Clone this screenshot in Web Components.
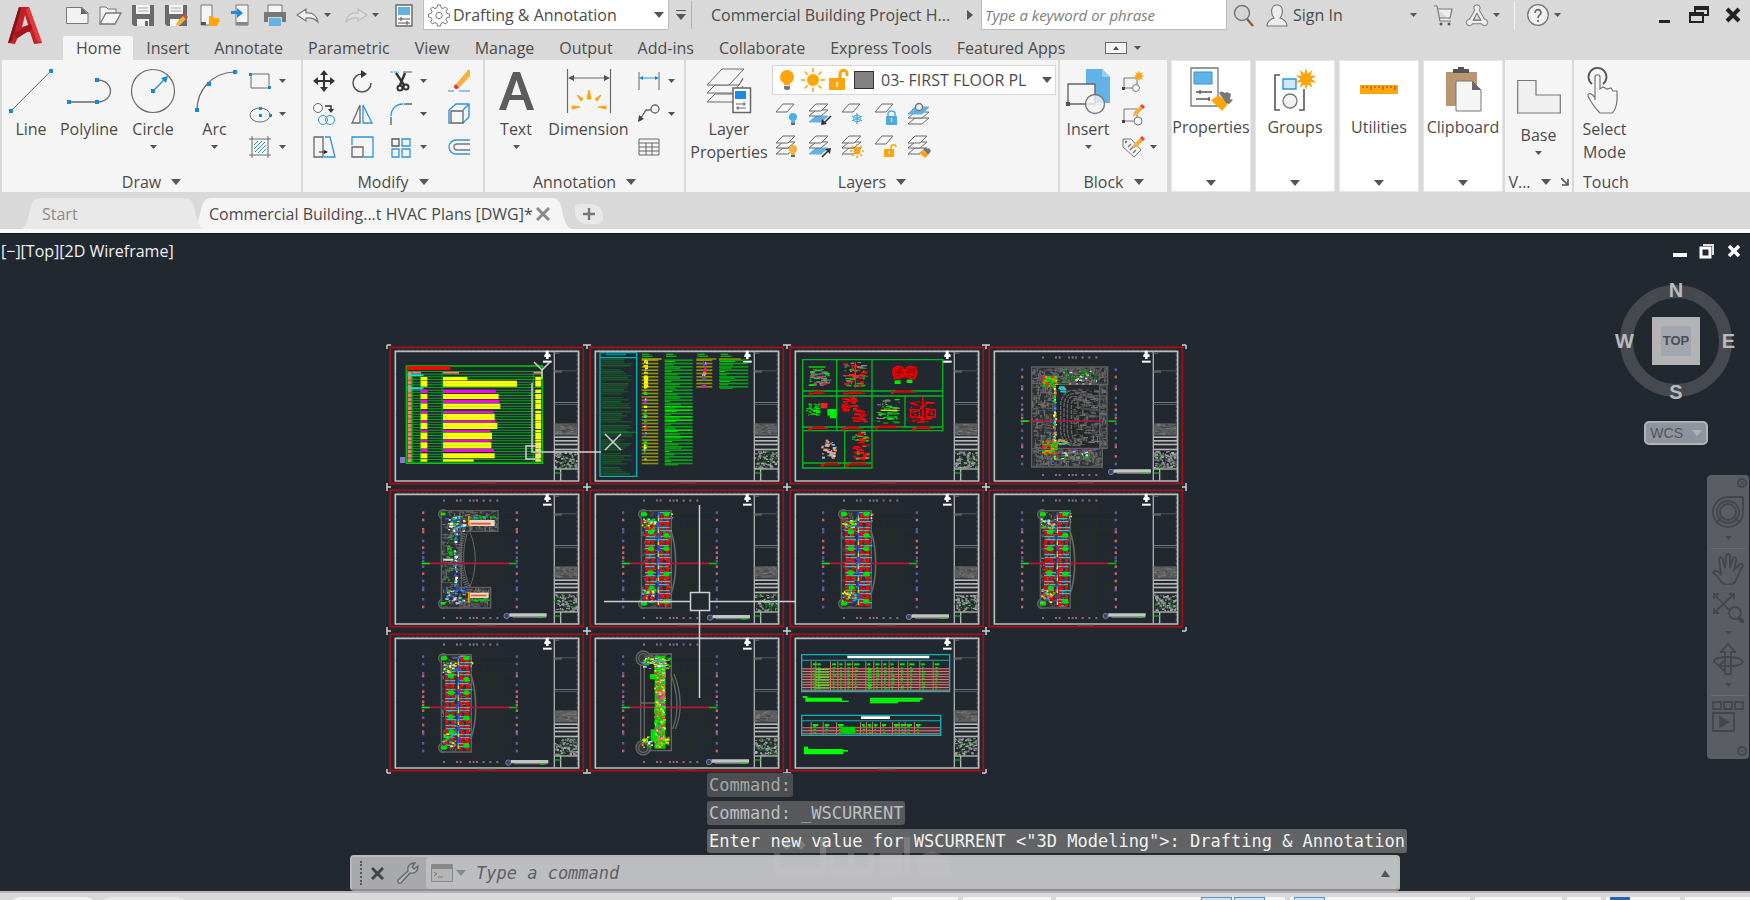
<!DOCTYPE html>
<html lang="en">
<head>
<meta charset="utf-8">
<title>Commercial Building Project HVAC</title>
<style>
  html, body {
    margin: 0;
    height: 100%;
    overflow: hidden;
    background: #d9d9d9;
  }
  body {
    font-family: "Open Sans", "Noto Sans", sans-serif;
    font-size: 16px;
    color: #4b4b4b;
  }
</style>
</head>
<body>
<cad-app></cad-app>

<script>
// ----- Shared bits -----
const RESET = `
  * { box-sizing: border-box; }
  button { border: 0; padding: 0; margin: 0; background: none; color: inherit; font: inherit; cursor: pointer; }
  svg { display: block; flex: none; }
`;

const caret = (w = 8, h = 5, color = '#555') =>
  `<svg width="${w}" height="${h}" viewBox="0 0 10 6" preserveAspectRatio="none"><path d="M0 0H10L5 6Z" fill="${color}"/></svg>`;

const B = '#2b95e0';
const G = '#6b6b6b';
const O = '#fda50a';
const sheet = (x, y, w = 18, h = 8, fill = '#f5f5f5') =>
  `<path d="M${x} ${y + h}L${x + 7} ${y}H${x + w}L${x + w - 7} ${y + h}Z" fill="${fill}" stroke="${fill === '#f5f5f5' ? G : '#62b2e6'}"/>`;
const stack = (last = '#f5f5f5') => sheet(0, 13, 19, 6, last) + sheet(0, 7, 19, 6) + sheet(0, 1, 19, 7);
const star = (cx, cy, r, n = 8) => {
  let d = '';
  for (let i = 0; i < n * 2; i++) {
    const a = Math.PI * i / n - Math.PI / 2;
    const q = i % 2 ? r * 0.5 : r;
    d += (i ? 'L' : 'M') + (cx + q * Math.cos(a)).toFixed(1) + ' ' + (cy + q * Math.sin(a)).toFixed(1);
  }
  return `<path d="${d}Z" fill="${O}"/>`;
};
const sun = (cx, cy, r) => {
  let s = `<circle cx="${cx}" cy="${cy}" r="${r}" fill="${O}"/>`;
  for (let i = 0; i < 8; i++) {
    s += `<path d="M${cx} ${cy - r - 1.5}V${cy - r * 2}" transform="rotate(${i * 45} ${cx} ${cy})" stroke="${O}" stroke-width="1.6"/>`;
  }
  return s;
};
const bulb = (cx, cy, r, c) =>
  `<circle cx="${cx}" cy="${cy}" r="${r}" fill="${c}"/><path d="M${cx - r / 2} ${cy + r}h${r}v2h-${r}z" fill="${c}"/><path d="M${cx - r / 2} ${cy + r + 2}h${r}v${r / 2}h-${r}z" fill="#666"/>`;
const pencil = (x, y) =>
  `<path d="M${x} ${y + 10}l1-4 6-6 3 3-6 6z" fill="#f3b13c"/><path d="M${x + 7} ${y}l2-2 3 3-2 2z" fill="#e8432e"/>`;

// ----- Icon drawings: [viewBox size, markup] -----
const ICONS = {
  // large tools
  line: [44, `<path d="M2 42L42 2" stroke="${G}" fill="none"/><path d="M0 40h4v4h-4zM40 0h4v4h-4z" fill="#1588e0"/>`],
  polyline: [44, `<path d="M2 33H30C48 33 48 11 30 11" stroke="${G}" fill="none" stroke-width="1.3"/><path d="M0 31h4v4H0zM28 31h4v4h-4zM28 9h4v4h-4z" fill="#1588e0"/>`],
  circle: [44, `<circle cx="22" cy="22" r="21.500" stroke="${G}" fill="none" stroke-width="1.2"/><path d="M22 22L34 10" stroke="${B}" stroke-width="1.4"/><path d="M20 20h4v4h-4zM37 7l-2 7-5-5z" fill="#1588e0"/>`],
  arc: [44, `<path d="M4 41C4 22 18 4 41 3" stroke="${G}" fill="none" stroke-width="1.2"/><path d="M2 39h4v4H2zM14 13h4v4h-4zM40 1h4v4h-4z" fill="#1588e0"/>`],
  text: [44, `<path d="M5 41L19 3H26L40 41H33L29.500 31H15.500L12 41ZM17.500 26H27.500L22.500 11Z" fill="#5c5c5c"/>`],
  dimension: [44, `<path d="M.5 0V44M43.500 0V44M4 9H40" stroke="${G}" stroke-width="1.2"/><path d="M1 9l6-3v6zM43 9l-6-3v6z" fill="#555"/><path d="M20 30l2-9 2 9zM14 32l-4-6 6 4zM30 32l4-6-6 4zM13 38l-8-1v3zM31 38l8-1v3z" fill="${O}" stroke="${O}"/>`],
  layerprops: [44, `<path d="M0 33L8 25H30M0 33H26M0 24L8 16H32L36 9" fill="none" stroke="${G}"/><path d="M0 24H26L36 10M27 32l9-15" fill="none" stroke="${G}"/><path d="M0 16L15 0H37L22 16Z" fill="#f5f5f5" stroke="${G}"/><path d="M26 19H43.500V43.500H26Z" fill="#fff" stroke="#666" stroke-width="1.5"/><path d="M28 22h11v8H28z" fill="#1b8be6"/><path d="M29 35h10M29 39h10M37 33v4M31 37v4" stroke="#666"/>`],
  insert: [44, `<path d="M20 0H36L44 8V34H20Z" fill="#62b2e6"/><path d="M36 0V8H44Z" fill="#9ccbec"/><path d="M2 15H29V35H2Z" fill="#f5f5f5" stroke="#666" stroke-width="1.4"/><circle cx="29" cy="35" r="9.500" fill="#f2f2f2" fill-opacity=".8" stroke="#777" stroke-width="1.4"/><path d="M0 33h4v4H0z" fill="#555"/>`],
  properties: [44, `<path d="M2 1H29V39H2Z" fill="#fafafa" stroke="#777" stroke-width="1.3"/><path d="M5 5h18v12H5z" fill="#62b2e6" stroke="#2b95e0"/><path d="M7 25h16M7 32h14M11 23v4M20 30v4" stroke="#555" stroke-width="1.3"/><path d="M22 33l8-5 9 9-6 7z" fill="${O}"/><path d="M30 26c5-4 4 2 8-1l4 2-1 5 3 1-4 4-3-1z" fill="#777"/>`],
  groups: [44, `<path d="M7 8H2V43H7M26 43H31V22" fill="none" stroke="#555" stroke-width="1.6"/><path d="M10 12h13v10H10z" fill="#cfe6f7" stroke="${B}" stroke-width="1.4"/><circle cx="17" cy="34" r="7" fill="#f2f2f2" stroke="#777" stroke-width="1.3"/>${star(33, 12, 11, 10)}`],
  utilities: [44, `<path d="M3 18H41V27H3Z" fill="${O}"/><path d="M6 19v2M10 19v2M14 19v4M18 19v2M22 19v2M26 19v4M30 19v2M34 19v2M38 19v4" stroke="#7a5200"/>`],
  clipboard: [44, `<path d="M5 5H36V39H5Z" fill="#b8966f"/><path d="M12 2h5V0h6v2h5v4H12z" fill="#555"/><path d="M15 14H31L40 23V44H15Z" fill="#f5f5f5" stroke="#777"/><path d="M31 14V23H40Z" fill="#666"/>`],
  base: [44, `<path d="M.7 5.500H19V20H43.300V38H.7Z" fill="#f0f0f0" stroke="#777" stroke-width="1.2"/>`],
  select: [44, `<path d="M9 15a9 9 0 1 1 11 0" fill="none" stroke="#555" stroke-width="1.8"/><path d="M12 31V8C12 5 17 5 17 8V20L20 18 24 20 28 19 30 22 34 22V31C34 37 31 43 29 44H17C12 39 8 33 5 27 5 23 9 24 12 29" fill="#f5f5f5" stroke="#777" stroke-width="1.2"/>`],

  // small tools
  rect: [22, `<path d="M2 4H20V18H2Z" fill="none" stroke="${G}"/><path d="M0 3h3v3H0zM19 16h3v3h-3z" fill="#1588e0"/>`],
  ellipse: [22, `<ellipse cx="11" cy="12" rx="10" ry="7" fill="none" stroke="${G}"/><path d="M10 4h3v3h-3zM10 11h3v3h-3zM20 11h3v3h-3z" fill="#1588e0"/>`],
  hatch: [22, `<path d="M3 0V22M19 0V22M0 3H22M0 19H22" stroke="${G}"/><path d="M5 9L9 5M5 13L13 5M6 16L16 6M9 17L17 9M13 17L17 13" stroke="${B}"/>`],
  move: [22, `<path d="M11 2V20M2 11H20" stroke="#333" stroke-width="2"/><path d="M11 0l4 5H7zM11 22l4-5H7zM0 11l5-4v8zM22 11l-5-4v8z" fill="#333"/>`],
  rotate: [22, `<path d="M11 4A9 9 0 1 0 20 13" fill="none" stroke="#555" stroke-width="1.500"/><path d="M10 0l6 4-6 4z" fill="#333"/>`],
  trim: [22, `<path d="M0 2H9" stroke="${B}" stroke-dasharray="3 1"/><path d="M13 2H22" stroke="#555"/><path d="M6 3L14 15M15 3L10 15" stroke="#333" stroke-width="2.400"/><circle cx="10" cy="18" r="2.500" fill="none" stroke="#333" stroke-width="2"/><circle cx="16" cy="17" r="2.500" fill="none" stroke="#333" stroke-width="2"/>`],
  erase: [22, `<path d="M8 14L20 0H22V6L12 17Z" fill="#f3b13c"/><path d="M6 16c2-3 4-1 5 2-3 2-5 1-5-2z" fill="#e8332e"/><path d="M0 21H6" stroke="#777"/><path d="M11 21H22" stroke="${B}"/>`],
  copy: [22, `<circle cx="5" cy="5" r="4.500" fill="none" stroke="${G}"/><circle cx="10" cy="17" r="4.500" fill="none" stroke="${B}"/><circle cx="17" cy="17" r="4.500" fill="none" stroke="${B}"/><path d="M12 3H18V7" fill="none" stroke="#333" stroke-width="1.500"/><path d="M18 10l-3-4h6z" fill="#333"/>`],
  mirror: [22, `<path d="M9 2V20H1Z" fill="none" stroke="${G}" stroke-width="1.300"/><path d="M12 2V20H21Z" fill="none" stroke="${B}" stroke-width="1.300"/>`],
  fillet: [22, `<path d="M1 13C1 6 6 1 13 1" fill="none" stroke="${B}" stroke-width="1.400"/><path d="M14 1H22M1 14V22" stroke="#666" stroke-width="1.400"/>`],
  explode: [22, `<path d="M1 7L8 1H21V14L15 20M21 1L15 7M1 7V20H3" fill="none" stroke="${B}" stroke-width="1.400"/><path d="M3 8H15V20H3Z" fill="#f5f5f5" stroke="#666" stroke-width="1.300"/>`],
  stretch: [22, `<path d="M1 1H10V21H1Z" fill="none" stroke="#666" stroke-width="1.300"/><path d="M12 1H17L22 21H11" fill="none" stroke="${B}" stroke-width="1.300"/><path d="M6 16H12" stroke="#222"/><path d="M15 16l-4-2v4z" fill="#222"/>`],
  scale: [22, `<path d="M1 9V1H22V21H13" fill="none" stroke="${B}" stroke-width="1.300"/><path d="M1 11H12V21H1Z" fill="none" stroke="#666" stroke-width="1.300"/>`],
  array: [22, `<path d="M2 3h7v7H2z" fill="none" stroke="#555" stroke-width="1.300"/><path d="M12 3h8v7h-8zM2 13h7v8H2zM12 13h8v8h-8z" fill="none" stroke="${B}" stroke-width="1.300"/>`],
  offset: [22, `<path d="M22 4H8A7 7 0 0 0 8 18H22" fill="none" stroke="${B}" stroke-width="1.300"/><path d="M22 8H9A3 3 0 0 0 9 14H22" fill="none" stroke="#777" stroke-width="1.300"/>`],
  linear: [22, `<path d="M1 2V20M21 2V20" stroke="#666"/><path d="M3 8H19" stroke="${B}"/><path d="M1 8l4-2v4zM21 8l-4-2v4z" fill="#1588e0"/>`],
  leader: [22, `<circle cx="17" cy="6" r="4" fill="none" stroke="#666" stroke-width="1.300"/><path d="M13 7H8L3 15" fill="none" stroke="#666" stroke-width="1.300"/><path d="M0 19l1-7 5 4z" fill="#444"/>`],
  table: [22, `<path d="M1 3H21V19H1ZM1 7H21M1 11H21M1 15H21M8 7V19M14 7V19" fill="none" stroke="#666"/>`],
  lyOff: [22, sheet(0, 1) + bulb(17, 14, 4, '#4fb0de')],
  lyPrev: [22, stack('#62b2e6') + `<path d="M22 13L14 21" stroke="#333" stroke-width="1.600"/><path d="M12 22l1-6 5 5z" fill="#333"/>`],
  lyFreeze: [22, sheet(0, 1) + `<path d="M15 10V21M10 13L20 18M20 13L10 18" stroke="#4fa9dc" stroke-width="1.300"/><circle cx="15" cy="15.500" r="3.500" fill="none" stroke="#4fa9dc"/>`],
  lyLock: [22, sheet(0, 1) + `<path d="M13 14v-3c0-4 7-4 7 0v3" fill="none" stroke="#4fa9dc" stroke-width="1.500"/><path d="M11 13h11v9H11z" fill="#4fa9dc"/><path d="M16.500 15v4" stroke="#fff"/>`],
  lyCurrent: [22, sheet(0, 15, 21, 6) + sheet(0, 9, 21, 6) + sheet(0, 4, 21, 7, '#62b2e6') + `<circle cx="11" cy="4" r="3.500" fill="#eee" stroke="#777" stroke-width="1.300"/>`],
  lyOn: [22, stack() + bulb(17, 14, 4, '#f3b13c')],
  lyNext: [22, stack('#62b2e6') + `<path d="M13 22L20 15" stroke="#333" stroke-width="1.600"/><path d="M22 13l-1 6-5-5z" fill="#333"/>`],
  lyThaw: [22, stack() + sun(15, 16, 3.5)],
  lyUnlock: [22, sheet(0, 1) + `<path d="M16 14v-2c0-3 5-3 5 0" fill="none" stroke="${O}" stroke-width="1.500"/><path d="M9 14h10v8H9z" fill="${O}"/><path d="M14 16v3" stroke="#fff"/>`],
  lyMatch: [22, stack() + `<path d="M11 18l4-3 5 5-3 3z" fill="${O}"/><path d="M15 14c4-3 3 1 6-1l2 3-3 4z" fill="#777"/>`],
  blkNew: [22, `<path d="M2 8H15V18H2Z" fill="none" stroke="#777"/><path d="M0 17h3v3H0z" fill="#444"/><circle cx="14" cy="18" r="3.500" fill="#f5f5f5" stroke="#777"/>${star(17, 6, 5.5)}`],
  blkEdit: [22, `<path d="M2 6H15V18H2Z" fill="none" stroke="#777"/><path d="M0 17h3v3H0z" fill="#444"/><circle cx="16" cy="18" r="4" fill="#f5f5f5" stroke="#777"/>${pencil(11, 3)}`],
  blkAttr: [22, `<path d="M1 3L9 3 19 14 12 21 1 11Z" fill="#f5f5f5" stroke="#777"/><circle cx="4" cy="6" r="1.200" fill="#777"/><path d="M6 11l3-3M8 14l5-5M11 17l3-3" stroke="#777" stroke-width="1.400"/>${pencil(11, 2)}`],

  // quick access
  qNew: [22, `<path d="M0.500 3.500H16L22 9V19.500H.5Z" fill="#f2f2f2" stroke="#777"/><path d="M15 3l7 7h-7z" fill="#666"/>`],
  qOpen: [22, `<path d="M1 20V3H7L9 5H17V9" fill="#f2f2f2" stroke="#777"/><path d="M1 20L7 9H22L16 20Z" fill="#f5f5f5" stroke="#777" stroke-width="1.300"/>`],
  qSave: [22, `<path d="M0 1H22V22H2L0 20Z" fill="#6a6a6a"/><path d="M4 1H18V10H4ZM5 15H17V22H5Z" fill="#f4f4f4"/><path d="M13 17h3v5h-3z" fill="#666"/><path d="M6 4h10M6 7h10" stroke="#aaa"/>`],
  qSaveAs: [22, `<path d="M0 1H22V22H2L0 20Z" fill="#6a6a6a"/><path d="M4 1H18V10H4ZM5 15H14V22H5Z" fill="#f4f4f4"/><path d="M6 4h10M6 7h10" stroke="#aaa"/>${pencil(11, 12)}`],
  qFrom: [22, `<path d="M3 1H14V21H3Z" fill="#f4f4f4" stroke="#777"/><path d="M3 18h5v3H3z" fill="#555"/><path d="M11 21V12h4l1 2h5v2h1l-3 6h-9z" fill="${O}"/>`],
  qTo: [22, `<path d="M5 1H17V21H5Z" fill="#f4f4f4" stroke="#777"/><path d="M5 18h12v3H5z" fill="#888"/><path d="M0 7h6V4l6 5-6 5v-4H0z" fill="#1b8be6"/>`],
  qPlot: [22, `<path d="M4 1H18V9H4Z" fill="#f4f4f4" stroke="#777"/><path d="M0 8h22v10h-4v-5H4v5H0z" fill="#777"/><path d="M5 14h12v8H5z" fill="#62b2e6"/>`],
  qUndo: [22, `<path d="M0 11L9 5V9C16 8 20 12 21 18 18 15 15 13 9 14V17Z" fill="#f2f2f2" stroke="#777" stroke-width="1.200"/>`],
  qRedo: [22, `<path d="M22 11L13 5V9C6 8 2 12 1 18 4 15 7 13 13 14V17Z" fill="#dedede" stroke="#bcbcbc" stroke-width="1.200"/>`],
  qSet: [22, `<path d="M3 1H19V22H3Z" fill="#f8f8f8" stroke="#666" stroke-width="1.400"/><path d="M5 3h12v8H5z" fill="#62b2e6"/><path d="M5 15h12M5 19h12M8 13v4M14 17v4" stroke="#555"/>`],
  gear: [22, `<path d="M9.500 1h3l.6 2.700 2 .8L17.500 3l2 2-1.500 2.400.8 2 2.700.6v3l-2.700.6-.8 2 1.500 2.400-2 2-2.400-1.500-2 .8-.6 2.700h-3l-.6-2.700-2-.8L4.500 20l-2-2L4 15.600l-.8-2L.5 13v-3l2.700-.6.8-2L2.500 5l2-2L7 4.500l2-.8z" fill="#fff" stroke="#777"/><circle cx="11" cy="11.500" r="3.200" fill="none" stroke="#777"/>`],
  search: [22, `<circle cx="9" cy="9" r="7.500" fill="#d4d4d4" stroke="#777" stroke-width="1.500"/><path d="M14 15L20 22" stroke="#8a5a3a" stroke-width="2.200"/>`],
  user: [22, `<path d="M1 22C1 17 5 15 8 14 4 9 5 1 11 1S18 9 14 14C17 15 21 17 21 22Z" fill="#ececec" stroke="#777" stroke-width="1.200"/>`],
  cart: [22, `<path d="M1 2H4L7 17H18M5 5H19L17 14H7" fill="#eee" stroke="#777" stroke-width="1.200"/><circle cx="8" cy="20" r="1.500" fill="#555"/><circle cx="16" cy="20" r="1.500" fill="#555"/>`],
  a360: [22, `<path d="M11 6L4 18H18Z" fill="none" stroke="#777" stroke-width="4.500" stroke-linejoin="round"/><g fill="#eee" stroke="#777"><circle cx="11" cy="4" r="3.200"/><circle cx="3.500" cy="18.500" r="3.200"/><circle cx="18.500" cy="18.500" r="3.200"/></g><path d="M11 6L4 18H18Z" fill="none" stroke="#eee" stroke-width="2.600" stroke-linejoin="round"/><path d="M11 9L7.500 16H14.500Z" fill="#d9d9d9" stroke="#777"/>`],
  help: [22, `<circle cx="11" cy="11" r="10.300" fill="#f0f0f0" stroke="#777" stroke-width="1.300"/><path d="M8 9C8 4 14.500 5 14 9 13.500 11.500 11 11 11 14M11 16v2" fill="none" stroke="#666" stroke-width="1.600"/>`],
  minimize: [22, `<path d="M5 16h11v3H5z" fill="#222"/>`],
  restore: [22, `<path d="M7 3H20V11H7ZM7 5h13" fill="none" stroke="#222" stroke-width="2"/><path d="M2 9H15V18H2Z" fill="#d9d9d9" stroke="#222" stroke-width="2"/><path d="M2 11h13" stroke="#222" stroke-width="2"/>`],
  close: [22, `<path d="M5 5L17 17M17 5L5 17" stroke="#222" stroke-width="4"/>`],
  vpMin: [22, `<path d="M4 12h14v4H4z" fill="#fff"/>`],
  vpRestore: [22, `<path d="M7 4H17V14" fill="none" stroke="#ddd" stroke-width="2"/><path d="M5 7H14V16H5Z" fill="none" stroke="#fff" stroke-width="3"/>`],
  vpClose: [22, `<path d="M6 5L16 15M16 5L6 15" stroke="#fff" stroke-width="3.500"/>`],
  // layer combo
  cBulb: [22, `<circle cx="11" cy="8" r="7" fill="${O}"/><path d="M8 14h6v2H8z" fill="${O}"/><path d="M8 17h6v3l-2 1h-2l-2-1z" fill="#777"/>`],
  cSun: [22, sun(11, 11, 6)],
  cLock: [22, `<path d="M12 9V5C12 0 19 0 19 5V7" fill="none" stroke="${O}" stroke-width="3"/><path d="M1 9h16v12H1z" fill="${O}"/><path d="M9 13v5" stroke="#fff" stroke-width="1.400"/>`],
};

const icon = (name, size) => {
  const [box, body] = ICONS[name];
  return `<svg width="${size || box}" height="${size || box}" viewBox="0 0 ${box} ${box}" fill="none" overflow="visible" aria-hidden="true">${body}</svg>`;
};

// ----- Icon button, optionally with a drop arrow -----
class CadIcon extends HTMLElement {
  constructor() {
    super();
    this.attachShadow({ mode: 'open' });
  }

  connectedCallback() {
    const name = this.getAttribute('name');
    const label = this.getAttribute('label') || name;
    this.shadowRoot.innerHTML = `
      <style>
        ${RESET}
        :host { display: flex; align-items: center; height: 32px; }
        .main { width: var(--cell, 38px); height: 100%; display: grid; place-items: center; }
        .drop { width: var(--drop, 18px); height: 100%; display: grid; place-items: center start; }
      </style>
      <button class="main" aria-label="${label}">${icon(name)}</button>
      ${this.hasAttribute('drop') ? `<button class="drop" aria-label="${label} options">${caret(7, 4)}</button>` : ''}
    `;
  }
}
customElements.define('cad-icon', CadIcon);

// ----- Large ribbon tool -----
class CadTool extends HTMLElement {
  constructor() {
    super();
    this.attachShadow({ mode: 'open' });
  }

  connectedCallback() {
    this.shadowRoot.innerHTML = `
      <style>
        ${RESET}
        :host { display: block; width: var(--w, 58px); flex: none; }
        button { width: 100%; display: flex; flex-direction: column; align-items: center; }
        span { margin-top: 5px; line-height: 23px; text-align: center; white-space: nowrap; }
        .drop { margin-top: 4px; }
      </style>
      <button>
        ${icon(this.getAttribute('icon'))}
        <span><slot></slot></span>
        ${this.hasAttribute('drop') ? `<i class="drop">${caret(7, 4)}</i>` : ''}
      </button>
    `;
  }
}
customElements.define('cad-tool', CadTool);

// ----- Ribbon panel with its title row -----
class RibbonPanel extends HTMLElement {
  constructor() {
    super();
    this.attachShadow({ mode: 'open' });
  }

  connectedCallback() {
    const label = this.getAttribute('label');
    const plain = this.hasAttribute('plain');
    this.shadowRoot.innerHTML = `
      <style>
        ${RESET}
        :host { display: flex; flex-direction: column; flex: none; background: #f5f5f5; height: 132px; }
        .tools { flex: 1; min-height: 0; display: flex; align-items: flex-start; padding-top: 9px; }
        .title { height: 20px; display: flex; justify-content: center; align-items: center; gap: 10px; line-height: 20px; }
        .plain { justify-content: flex-start; padding-left: 9px; }
      </style>
      <div class="tools"><slot></slot></div>
      <button class="title ${plain ? 'plain' : ''}">${label}${plain ? '' : caret(10, 6)}<slot name="extra"></slot></button>
    `;
  }
}
customElements.define('ribbon-panel', RibbonPanel);

// ----- Panel folded to a single button -----
class RibbonFolded extends HTMLElement {
  constructor() {
    super();
    this.attachShadow({ mode: 'open' });
  }

  connectedCallback() {
    this.shadowRoot.innerHTML = `
      <style>
        ${RESET}
        :host { display: block; flex: none; width: 80px; height: 132px; border: 1px solid #e6e6e6; background: #fff; }
        button { width: 100%; height: 100%; padding: 6px 0 5px; display: flex; flex-direction: column; align-items: center; }
        span { line-height: 23px; margin-top: 5px; flex: 1; }
      </style>
      <button>${icon(this.getAttribute('icon'))}<span><slot></slot></span>${caret(10, 6)}</button>
    `;
  }
}
customElements.define('ribbon-folded', RibbonFolded);

// ----- Title bar -----
class TitleBar extends HTMLElement {
  constructor() {
    super();
    this.attachShadow({ mode: 'open' }).innerHTML = `
      <style>
        ${RESET}
        :host { display: flex; align-items: center; height: 32px; padding: 0 0 2px 60px; white-space: nowrap; }
        cad-icon { --cell: 33px; --drop: 15px; height: 28px; flex: none; }
        .ws { display: flex; align-items: center; width: 246px; height: 30px; padding: 0 4px; background: #fff; border: 1px solid #bdbdbd; border-top: 0; margin: 0 6px 0 3px; flex: none; }
        .ws select { flex: 1; min-width: 0; appearance: none; border: 0; background: none; font: inherit; color: inherit; padding: 0 0 0 3px; }
        .more { display: flex; flex-direction: column; align-items: center; gap: 3px; width: 12px; }
        .more::before { content: ""; width: 10px; height: 1px; background: #555; }
        .sep { width: 1px; height: 28px; background: #b0b0b0; margin: 0 19px 0 4px; }
        .doc { flex: none; width: 240px; }
        .play { margin: 0 8px 0 16px; }
        .find { width: 246px; height: 30px; border: 1px solid #bdbdbd; border-top: 0; margin: 0; padding: 0 3px; font: inherit; font-size: 15px; font-style: italic; background: #fff; flex: none; }
        .find::placeholder { color: #7d7d7d; }
        .sign { display: flex; align-items: center; width: 117px; }
        .sep.white { background: #f2f2f2; margin: 0 6px; }
        .cart { margin-left: 10px; }
        .win { margin-left: auto; display: flex; --cell: 34px; }
        .win cad-icon { --cell: inherit; }
      </style>
      <cad-icon name="qNew" label="New"></cad-icon>
      <cad-icon name="qOpen" label="Open"></cad-icon>
      <cad-icon name="qSave" label="Save"></cad-icon>
      <cad-icon name="qSaveAs" label="Save As"></cad-icon>
      <cad-icon name="qFrom" label="Open from mobile"></cad-icon>
      <cad-icon name="qTo" label="Save to mobile"></cad-icon>
      <cad-icon name="qPlot" label="Plot"></cad-icon>
      <cad-icon name="qUndo" label="Undo" drop></cad-icon>
      <cad-icon name="qRedo" label="Redo" drop></cad-icon>
      <cad-icon name="qSet" label="Sheet set"></cad-icon>
      <label class="ws">${icon('gear')}
        <select aria-label="Workspace"><option>Drafting &amp; Annotation</option></select>
        ${caret(10, 6)}
      </label>
      <button class="more" aria-label="Customize">${caret(10, 6)}</button>
      <span class="sep"></span>
      <span class="doc">Commercial Building Project H...</span>
      <svg class="play" width="6" height="10" viewBox="0 0 6 10"><path d="M0 0L6 5L0 10Z" fill="#555"/></svg>
      <input class="find" placeholder="Type a keyword or phrase" aria-label="Search">
      <cad-icon name="search" label="Search"></cad-icon>
      <cad-icon name="user" label="Account"></cad-icon>
      <button class="sign">Sign In</button>
      ${caret(7, 4)}
      <cad-icon class="cart" name="cart" label="Store"></cad-icon>
      <cad-icon name="a360" label="App menu" drop></cad-icon>
      <span class="sep white"></span>
      <cad-icon name="help" label="Help" drop></cad-icon>
      <span class="win">
        <cad-icon name="minimize" label="Minimize"></cad-icon>
        <cad-icon name="restore" label="Restore"></cad-icon>
        <cad-icon name="close" label="Close"></cad-icon>
      </span>
    `;
  }
}
customElements.define('title-bar', TitleBar);

// ----- Ribbon tabs -----
class RibbonTabs extends HTMLElement {
  constructor() {
    super();
    const tabs = ['Home', 'Insert', 'Annotate', 'Parametric', 'View', 'Manage', 'Output', 'Add-ins', 'Collaborate', 'Express Tools', 'Featured Apps'];
    this.attachShadow({ mode: 'open' }).innerHTML = `
      <style>
        ${RESET}
        :host { display: flex; align-items: flex-end; height: 28px; padding-left: 63px; white-space: nowrap; }
        button { height: 24px; padding: 0 12px 0 13px; line-height: 24px; }
        .on { background: #f5f5f5; border-radius: 2px 2px 0 0; }
        .fold { display: flex; align-items: center; gap: 7px; margin-left: 28px; padding: 0; }
        .fold i { display: grid; place-items: center; width: 22px; height: 12px; border: 1px solid #666; background: #f5f5f5; }
      </style>
      ${tabs.map((t, i) => `<button class="${i ? '' : 'on'}">${t}</button>`).join('')}
      <button class="fold" aria-label="Minimize ribbon"><i><svg width="6" height="4" viewBox="0 0 6 4"><path d="M0 4L3 0L6 4Z" fill="#555"/></svg></i>${caret(7, 4)}</button>
    `;
  }
}
customElements.define('ribbon-tabs', RibbonTabs);

// ----- Ribbon -----
class CadRibbon extends HTMLElement {
  constructor() {
    super();
    this.attachShadow({ mode: 'open' }).innerHTML = `
      <style>
        ${RESET}
        :host { display: flex; gap: 2px; padding-left: 2px; height: 132px; }
        .col { display: flex; flex-direction: column; margin-top: -5px; }
        .col cad-icon { height: 33px; }
        .block { --cell: 34px; --drop: 14px; }
        .grid { display: grid; grid-template-columns: 38px 39px 58px 38px; grid-auto-rows: 33px; padding-left: 2px; margin-top: -5px; }
        .grid cad-icon { height: 33px; }
        .layers { display: flex; flex-direction: column; margin-top: -4px; }
        .combo { display: flex; align-items: center; gap: 4px; width: 284px; height: 30px; background: #fff; border: 1px solid #d6d6d6; padding: 0 3px; margin-bottom: 3px; }
        .combo b { width: 20px; height: 18px; background: #828080; border: 1px solid #333; }
        .combo select { flex: 1; min-width: 0; appearance: none; border: 0; padding: 0 0 0 3px; background: none; font: inherit; color: inherit; }
        .rows { display: grid; grid-template-columns: repeat(5, 33px); grid-auto-rows: 32px; }
        .rows cad-icon { --cell: 30px; }
        .last { flex: 1; }
        .folds { display: flex; gap: 4px; padding-left: 2px; }
        .base { padding-top: 6px; }
      </style>
      <ribbon-panel label="Draw" style="width:299px">
        <cad-tool icon="line">Line</cad-tool>
        <cad-tool icon="polyline">Polyline</cad-tool>
        <cad-tool icon="circle" drop style="--w:70px">Circle</cad-tool>
        <cad-tool icon="arc" drop style="--w:53px">Arc</cad-tool>
        <div class="col">
          <cad-icon name="rect" label="Rectangle" drop></cad-icon>
          <cad-icon name="ellipse" label="Ellipse" drop></cad-icon>
          <cad-icon name="hatch" label="Hatch" drop></cad-icon>
        </div>
      </ribbon-panel>
      <ribbon-panel label="Modify" style="width:180px">
        <div class="grid">
          <cad-icon name="move"></cad-icon><cad-icon name="rotate"></cad-icon><cad-icon name="trim" drop></cad-icon><cad-icon name="erase"></cad-icon>
          <cad-icon name="copy"></cad-icon><cad-icon name="mirror"></cad-icon><cad-icon name="fillet" drop></cad-icon><cad-icon name="explode"></cad-icon>
          <cad-icon name="stretch"></cad-icon><cad-icon name="scale"></cad-icon><cad-icon name="array" drop></cad-icon><cad-icon name="offset"></cad-icon>
        </div>
      </ribbon-panel>
      <ribbon-panel label="Annotation" style="width:199px">
        <cad-tool icon="text" drop style="--w:62px">Text</cad-tool>
        <cad-tool icon="dimension" style="--w:83px">Dimension</cad-tool>
        <div class="col">
          <cad-icon name="linear" label="Linear" drop></cad-icon>
          <cad-icon name="leader" label="Leader" drop></cad-icon>
          <cad-icon name="table" label="Table"></cad-icon>
        </div>
      </ribbon-panel>
      <ribbon-panel label="Layers" style="width:372px">
        <cad-tool icon="layerprops" style="--w:86px">Layer<br>Properties</cad-tool>
        <div class="layers">
          <label class="combo">${icon('cBulb')}${icon('cSun')}${icon('cLock')}<b></b>
            <select aria-label="Layer"><option>03- FIRST FLOOR PL</option></select>${caret(10, 6)}
          </label>
          <div class="rows">
            <cad-icon name="lyOff"></cad-icon><cad-icon name="lyPrev"></cad-icon><cad-icon name="lyFreeze"></cad-icon><cad-icon name="lyLock"></cad-icon><cad-icon name="lyCurrent"></cad-icon>
            <cad-icon name="lyOn"></cad-icon><cad-icon name="lyNext"></cad-icon><cad-icon name="lyThaw"></cad-icon><cad-icon name="lyUnlock"></cad-icon><cad-icon name="lyMatch"></cad-icon>
          </div>
        </div>
      </ribbon-panel>
      <ribbon-panel label="Block" style="width:107px">
        <cad-tool icon="insert" drop style="--w:56px">Insert</cad-tool>
        <div class="col block">
          <cad-icon name="blkNew"></cad-icon>
          <cad-icon name="blkEdit"></cad-icon>
          <cad-icon name="blkAttr" drop></cad-icon>
        </div>
      </ribbon-panel>
      <div class="folds">
        <ribbon-folded icon="properties">Properties</ribbon-folded>
        <ribbon-folded icon="groups">Groups</ribbon-folded>
        <ribbon-folded icon="utilities">Utilities</ribbon-folded>
        <ribbon-folded icon="clipboard">Clipboard</ribbon-folded>
      </div>
      <ribbon-panel label="V..." style="width:67px">
        <cad-tool class="base" icon="base" drop style="--w:67px">Base</cad-tool>
        <svg slot="extra" width="8" height="8" viewBox="0 0 8 8"><path d="M0 0L7 7M7 1V7H1" fill="none" stroke="#555" stroke-width="1.600"/></svg>
      </ribbon-panel>
      <ribbon-panel class="last" label="Touch" plain>
        <cad-tool icon="select" style="--w:61px">Select<br>Mode</cad-tool>
      </ribbon-panel>
    `;
  }
}
customElements.define('cad-ribbon', CadRibbon);

// ----- Drawing file tabs -----
class FileTabs extends HTMLElement {
  constructor() {
    super();
    const cap = (cls) => `<svg class="${cls}" width="22" height="31" viewBox="0 0 22 31"><path d="M22 0H20C10 0 11 12 8 20C6 27 4 30 0 31H22Z" fill="currentColor"/></svg>`;
    this.attachShadow({ mode: 'open' }).innerHTML = `
      <style>
        ${RESET}
        :host { display: flex; align-items: flex-end; height: 38px; padding-left: 20px; border-bottom: 1px solid #fafafa; white-space: nowrap; }
        .tab { display: flex; color: #e8e8e8; }
        .tab .mid { display: flex; align-items: center; gap: 5px; background: currentColor; height: 31px; }
        .tab .mid > * { color: #8a8a8a; }
        .tab.on { color: #f5f5f5; margin-left: -14px; }
        .tab.on .mid > * { color: #4b4b4b; }
        .flip { transform: scaleX(-1); }
        .start { width: 141px; text-align: left; }
        .name { width: 322px; text-align: left; margin-left: -4px; }
        .new { width: 28px; height: 20px; margin: 0 0 5px 3px; border-radius: 4px 12px 6px 12px; background: #e8e8e8; display: grid; place-items: center; }
      </style>
      <div class="tab">${cap('')}<div class="mid"><button class="start">Start</button></div>${cap('flip')}</div>
      <div class="tab on">${cap('')}<div class="mid"><button class="name">Commercial Building...t HVAC Plans [DWG]*</button>
        <button aria-label="Close drawing"><svg width="14" height="14" viewBox="0 0 14 14"><path d="M1 1L13 13M13 1L1 13" stroke="#8a8a8a" stroke-width="3"/></svg></button></div>${cap('flip')}</div>
      <button class="new" aria-label="New drawing"><svg width="12" height="12" viewBox="0 0 12 12"><path d="M6 0V12M0 6H12" stroke="#777" stroke-width="2.400"/></svg></button>
    `;
  }
}
customElements.define('file-tabs', FileTabs);

// ----- Model space: eleven plan sheets, drawn at three units to the pixel -----
class ModelSpace extends HTMLElement {
  constructor() {
    super();
    this.attachShadow({ mode: 'open' });
    this.seed = 7;
  }

  rnd(a = 1, b = 0) {
    this.seed = (this.seed * 16807) % 2147483647;
    return b + (this.seed / 2147483647) * (a - b);
  }

  rect(x, y, w, h, c) {
    return `<path d="M${Math.round(x)} ${Math.round(y)}h${Math.round(w)}v${Math.round(h)}h-${Math.round(w)}z" fill="${c}"/>`;
  }

  box(x, y, w, h, c, s = 3) {
    return `<path d="M${x} ${y}h${w}v${h}h-${w}z" fill="none" stroke="${c}" stroke-width="${s}"/>`;
  }

  blob(x, y, w, h, n, colors, mw = 12, mh = 6) {
    let s = '';
    for (let i = 0; i < n; i++) {
      const c = colors[Math.floor(this.rnd(colors.length))];
      const bw = this.rnd(mw, 3);
      const bh = this.rnd(mh, 3);
      s += this.rect(x + this.rnd(w - bw), y + this.rnd(h - bh), bw, bh, c);
    }
    return s;
  }

  // walls: a loose mesh of grey runs in both directions
  walls(x, y, w, h, n) {
    const gray = ['#5c5c5c', '#707070', '#4c4c4c', '#666'];
    let s = this.rect(x, y, w, h, '#2d3237');
    s += this.blob(x, y, w, h, n, gray, 20, 4) + this.blob(x, y, w, h, n, gray, 4, 16);
    return s + this.box(x, y, w, h, '#606060', 4);
  }

  frame() {
    let s = this.box(1, 1, 579, 409, '#a81014', 5);
    s += this.box(16, 13, 550, 389, '#bdbdbd', 5);
    s += `<path d="M22 10H560M562 20V396M16 80v4M14 205h4" stroke="#8a8a8a" stroke-width="2" stroke-dasharray="9 5"/>`;
    s += `<path d="M493 13V402" stroke="#b0b0b0" stroke-width="4"/>`;
    s += this.rect(494, 16, 14, 5, '#555') + this.rect(494, 70, 22, 7, '#666') + this.rect(494, 70, 70, 3, '#555');
    s += this.rect(494, 165, 70, 3, '#777') + this.rect(494, 171, 70, 3, '#555');
    s += this.rect(494, 229, 70, 36, '#5a5c5e') + this.blob(494, 229, 70, 36, 40, ['#777', '#484848', '#666'], 14, 4);
    for (const y of [268, 279, 290, 305]) s += this.rect(494, y, 72, 5, '#b5b5b5');
    s += this.blob(494, 312, 72, 54, 120, ['#aaa', '#999', '#888', '#126a1a', '#888', '#1f4525'], 9, 6);
    s += this.rect(494, 364, 72, 4, '#b5b5b5') + this.rect(510, 366, 4, 36, '#b5b5b5') + this.rect(495, 376, 17, 4, '#0b0');
    s += `<path d="M463 24l4-4V11h9v9l6 3v7h-6v6h-8v-6h-5z" fill="#fff"/>` + this.rect(459, 41, 26, 6, '#fff');
    s += this.rect(266, 402, 50, 4, '#888');
    return s;
  }

  markers() {
    let s = '';
    const xs = [162, 201, 212, 240, 251, 261, 281, 301, 322];
    const ys = [67, 89, 117, 125, 152, 172, 187, 202, 212, 229, 250, 272, 292, 299, 327, 350];
    for (const x of xs) {
      s += `<path d="M${x} 42V372" stroke="#2a2d22" stroke-width="3"/>`;
      s += this.rect(x - 3, 28, 6, 7, this.rnd() > .5 ? '#a0607a' : '#7a6090') + this.rect(x - 3, 381, 6, 6, '#a0607a');
    }
    for (const y of ys) {
      s += `<path d="M104 ${y}H372" stroke="#2a2d22" stroke-width="2"/>`;
      const c = this.rnd() > .5 ? '#c06070' : '#6058a0';
      s += this.rect(96, y - 3, 7, 8, c) + this.rect(377, y - 3, 7, 8, c);
    }
    return s;
  }

  axis() {
    return `<path d="M118 220H360" stroke="#b8143c" stroke-width="5"/>` +
      this.rect(95, 218, 24, 5, '#0e0') + this.rect(358, 218, 24, 5, '#0b0');
  }

  corners(r = 14) {
    return [73, 341].map(y => `<circle cx="160" cy="${y}" r="${r}" fill="#33383c" stroke="#666" stroke-width="4"/>`).join('');
  }

  scaleBar(x, y) {
    return `<circle cx="${x}" cy="${y}" r="8" fill="#445" stroke="#77b" stroke-width="3"/>` +
      this.rect(x + 8, y - 8, 112, 10, '#c4c4c4') + this.rect(x + 18, y + 2, 100, 3, '#888') + this.rect(x + 95, y + 2, 14, 4, '#0d0');
  }

  tower() {
    let s = this.markers() + this.corners() + this.walls(154, 62, 90, 292, 110);
    s += `<path d="M242 120C262 175 262 265 242 315" fill="none" stroke="#666" stroke-width="5"/>`;
    s += this.axis();
    for (let y = 66, i = 0; y < 344; y += 9, i++) {
      // left and right runs of rooms
      for (const [x, w, l] of [[164, 34, 0], [206, 36, 1]]) {
        if (!l && (y < 92 || y > 318)) continue;
        if (i % 3 !== 1) s += this.rect(x + this.rnd(5), y, w - this.rnd(8), 4, '#14cbe0');
        s += this.rect(x + this.rnd(4), y + 4, 9, 9, '#f00') + this.rect(x + w - 14, y + 4, 9, 9, '#ee0808');
        if (this.rnd() > .5) s += this.rect(x + 12, y + 2, 6, 7, '#e00');
      }
      s += this.rect(203, y, 4, 9, ['#25f', '#14cbe0', '#fd0', '#25f'][i % 4]);
    }
    for (const [x, y] of [[153, 68], [153, 336], [220, 68], [220, 132], [220, 172], [220, 248], [220, 330], [174, 122], [174, 172], [172, 244], [176, 290]]) {
      s += this.rect(x, y, 18, 9, '#0e0') + this.rect(x + 3, y - 3, 12, 14, '#0d0');
    }
    s += this.blob(155, 84, 46, 36, 44, ['#0e0', '#f00', '#ff0', '#25f', '#0e0', '#ddd'], 9, 6);
    s += this.blob(155, 296, 46, 44, 50, ['#0e0', '#f00', '#25f', '#88c', '#14cbe0', '#ff0'], 9, 6);
    s += this.blob(240, 68, 10, 30, 6, ['#ff0', '#88c'], 5, 5);
    return s;
  }

  ground() {
    const mix = ['#fff', '#ddd', '#0c0', '#25f', '#12b0e8', '#fff', '#222'];
    let s = this.markers() + this.corners() + this.walls(154, 62, 60, 292, 90);
    s += this.walls(210, 62, 114, 62, 66) + this.walls(210, 292, 92, 62, 56);
    s += `<path d="M222 130C206 180 206 240 232 290" fill="none" stroke="#666" stroke-width="12" stroke-dasharray="4 3"/>`;
    s += `<path d="M232 128C216 180 216 240 240 290M240 128C260 170 262 240 240 290" fill="none" stroke="#666" stroke-width="3"/>`;
    s += this.axis();
    s += this.blob(192, 80, 12, 264, 64, mix, 9, 8) + this.blob(162, 76, 68, 50, 44, mix, 12, 6) + this.blob(162, 292, 68, 50, 44, mix, 12, 6);
    s += this.blob(168, 130, 24, 160, 26, ['#0b0', '#0c0', '#777'], 14, 6);
    s += this.rect(238, 90, 76, 18, '#e8d8c8') + this.rect(242, 98, 60, 6, '#e0622a') + this.rect(234, 78, 5, 28, '#f90');
    s += this.rect(240, 308, 56, 16, '#e8d8c8') + this.rect(242, 314, 48, 5, '#e0622a') + this.rect(234, 306, 5, 32, '#f90');
    s += this.blob(236, 78, 90, 10, 20, ['#0c0', '#0a0', '#12b0e8']) + this.blob(236, 326, 66, 10, 18, ['#0c0', '#0a0']);
    s += this.rect(160, 206, 30, 6, '#ddd') + this.rect(152, 68, 14, 8, '#0e0') + this.rect(152, 336, 14, 8, '#0e0');
    return s;
  }

  roof() {
    let s = this.markers() + this.corners(22) + this.corners(14) + this.blob(160, 60, 84, 14, 30, ['#555', '#666'], 12, 5);
    s += `<path d="M152 90V325M163 90V325M152 207H200M176 60H244V350H176" fill="none" stroke="#666" stroke-width="4"/>`;
    s += `<path d="M242 120C266 180 266 240 248 285M252 120C276 180 276 240 256 285" fill="none" stroke="#666" stroke-width="4"/>`;
    s += this.axis();
    s += this.rect(194, 66, 32, 278, '#0c0');
    s += this.blob(192, 70, 36, 272, 380, ['#0f0', '#f33', '#ff0', '#f0f', '#0c0', '#dca', '#0f0', '#a80', '#f55'], 9, 6);
    s += this.blob(155, 70, 90, 36, 54, ['#0e0', '#ff0', '#fff', '#88f', '#0c0'], 12, 7) + this.blob(155, 306, 90, 36, 54, ['#0e0', '#ff0', '#fff', '#f80', '#0c0'], 12, 7);
    s += this.rect(180, 120, 16, 16, '#0d0') + this.rect(182, 286, 14, 36, '#0d0');
    return s;
  }

  site() {
    const gray = ['#555', '#666', '#4a4a4a', '#777'];
    let s = this.markers();
    s += this.walls(128, 60, 228, 52, 150) + this.walls(128, 304, 212, 56, 150);
    s += this.walls(128, 110, 70, 195, 120) + this.blob(250, 125, 86, 170, 170, gray, 22, 4) + this.blob(250, 125, 86, 170, 60, gray, 4, 22);
    s += this.walls(332, 112, 22, 192, 40);
    for (const r of [0, 10, 20, 32]) s += `<path d="M${260 + r} ${130 + r}H${245 + r}Q${215 + r} 140 ${215 + r} 180V245Q${215 + r} 285 ${245 + r} 295H260" fill="none" stroke="#666" stroke-width="4" stroke-dasharray="12 3"/>`;
    s += `<path d="M118 222H340" stroke="#b8143c" stroke-width="5"/>` + this.rect(95, 220, 24, 5, '#0e0') + this.rect(358, 220, 24, 5, '#0b0');
    s += this.blob(192, 86, 12, 264, 76, ['#12d0e8', '#25f', '#f80', '#0e0', '#ff0', '#fff'], 8, 8);
    s += this.blob(158, 86, 50, 34, 60, ['#0e0', '#f22', '#0c0', '#f80'], 14, 8) + this.blob(158, 280, 50, 44, 70, ['#0e0', '#f22', '#0c0', '#0e0', '#f80'], 14, 8);
    s += this.blob(206, 116, 28, 22, 14, ['#12d0e8', '#f80', '#12d0e8'], 20, 4) + this.blob(200, 276, 40, 20, 14, ['#12d0e8', '#f80'], 24, 4);
    s += this.blob(216, 68, 108, 40, 70, ['#0a0', '#777', '#ddd', '#070'], 9, 6) + this.blob(216, 312, 90, 26, 50, ['#0a0', '#777', '#ddd'], 9, 6);
    for (let x = 240; x < 320; x += 10) s += this.rect(x, 108, 7, 5, x % 20 ? '#25f' : '#f80') + this.rect(x, 308, 7, 5, x % 20 ? '#25f' : '#f33');
    return s + this.scaleBar(366, 375);
  }

  schedule() {
    let s = this.box(49, 57, 408, 292, '#0c0', 4);
    for (let y = 72; y < 348; y += 8) s += this.rect(49, y, 408, 3, '#07a318');
    s += `<path d="M67 72V349M92 72V349M156 72V349M430 72V349" stroke="#0a0" stroke-width="3"/>`;
    s += this.rect(50, 58, 131, 11, '#f00');
    s += this.rect(68, 74, 25, 6, '#f08070') + this.rect(159, 74, 48, 6, '#f08070') + this.rect(432, 74, 24, 6, '#f08070');
    for (let y = 74; y < 342; y += 13) s += this.rect(53, y, 12, 11, '#f08078');
    const bars = [[90, 10, 73], [101, 18, 222], [128, 10, 158, 1], [141, 15, 167], [158, 10, 168, 1], [170, 16, 172], [191, 7, 152, 1], [200, 20, 155], [221, 6, 158, 1], [228, 18, 163], [249, 6, 142, 1], [257, 20, 147], [278, 6, 143, 1], [286, 18, 145], [306, 9, 152, 1], [319, 15, 155], [337, 7, 92]];
    for (const [y, h, w, m] of bars) {
      const c = m ? '#f0f' : '#ff0';
      s += this.rect(92, y, 20, h, c) + this.rect(159, y, w, h, c) + this.rect(436, y, 17, h, '#ff0');
      if (h > 12) s += this.rect(159, y + h / 2, w, 1, '#7d7');
    }
    s += this.rect(53, 82, 47, 5, '#1de') + this.rect(53, 121, 47, 6, '#1de');
    return s + this.rect(30, 330, 16, 18, '#8078c8');
  }

  notes() {
    let s = this.box(30, 17, 110, 371, '#0ab0b8', 4) + this.rect(30, 30, 110, 4, '#0ab0b8') + this.rect(48, 20, 60, 5, '#0a8a90') + this.rect(30, 254, 110, 3, '#0a8a30');
    for (let y = 37, k = 0; y < 380; y += 6, k++) {
      if (k % 7 !== 4) s += this.rect(36, y, this.rnd(96, 50), 3, k % 3 ? '#16602a' : '#127a28');
    }
    for (let y = 37; y < 356; y += 10) {
      const g = this.rnd() > .4 ? '#0a9a1c' : '#0d0';
      s += this.rect(155, y, 50, 5, '#8f8f08') + this.rect(224, y, 84, 5, g) + this.rect(224, y + 5, this.rnd(50, 14), 3, '#0c0');
      if (y < 120) s += this.rect(319, y, 48, 5, '#8f8f08') + this.rect(387, y, 88, 5, g) + this.rect(389, y + 5, this.rnd(50, 14), 3, '#0c0');
    }
    s += this.rect(155, 34, 60, 4, '#bb0') + this.rect(387, 34, 66, 4, '#990') + this.rect(319, 34, 60, 4, '#990');
    for (const x of [156, 228, 322, 392]) s += this.rect(x, 20, 22, 4, '#0b0') + this.rect(x, 26, 32, 4, '#0b0');
    s += this.blob(161, 38, 14, 90, 34, ['#ff0', '#ff0', '#dd0'], 14, 8) + this.blob(161, 130, 10, 222, 40, ['#f22', '#f0f', '#25f', '#0e0', '#1de', '#ff0'], 10, 8);
    return s + this.blob(336, 34, 14, 88, 20, ['#f22', '#f0f', '#25f', '#ddd', '#f80'], 12, 8);
  }

  details() {
    const c = '#00b81e';
    let s = `<path d="M38 38H458V251H38ZM38 132H458M38 147H458M38 240H458M38 251V363H246V38M140 38V251M345 147V240M164 251V363M38 348H246" fill="none" stroke="${c}" stroke-width="4"/>`;
    s += this.blob(56, 66, 70, 52, 52, ['#0e0', '#b4a', '#888', '#0c0', '#f22'], 18, 5) + this.rect(56, 58, 50, 4, '#0e0');
    s += this.blob(158, 44, 76, 76, 60, ['#e11', '#0c0', '#888', '#f22'], 18, 5) + this.rect(194, 46, 4, 76, '#f22') + this.rect(158, 84, 70, 4, '#f22');
    s += `<circle cx="326" cy="76" r="18" fill="#a00" stroke="#f00" stroke-width="4"/><circle cx="362" cy="76" r="18" fill="#900" stroke="#f00" stroke-width="4"/>`;
    s += this.blob(308, 58, 74, 40, 40, ['#f00', '#e00', '#c00'], 16, 4) + this.rect(314, 100, 18, 11, '#0e0') + this.rect(350, 98, 17, 10, '#0e0');
    s += this.blob(48, 168, 46, 40, 34, ['#0e0', '#0c0'], 18, 5) + this.rect(92, 168, 20, 16, '#e22') + this.rect(112, 186, 28, 20, '#0e0') + this.rect(120, 200, 18, 14, '#0e0');
    s += this.blob(154, 148, 52, 46, 40, ['#f00', '#d00', '#a33'], 18, 6) + this.blob(186, 186, 48, 40, 34, ['#f00', '#d00', '#a33'], 18, 5);
    s += this.blob(258, 154, 72, 76, 56, ['#0e0', '#0c0', '#888', '#0a0'], 24, 4) + this.rect(272, 188, 50, 4, '#dd0');
    s += this.blob(356, 160, 80, 70, 50, ['#f00', '#e11', '#c00'], 18, 5) + this.rect(396, 150, 4, 76, '#f00') + this.box(362, 188, 26, 22, '#f00', 4) + this.box(410, 188, 26, 22, '#f00', 4);
    s += this.blob(92, 278, 50, 60, 34, ['#dca', '#e99', '#9bd', '#5a5', '#ea6'], 16, 7);
    s += this.blob(184, 252, 56, 90, 60, ['#f00', '#e00', '#888', '#0d0', '#f00'], 20, 6);
    for (const [x, y, w] of [[56, 138, 50], [160, 138, 66], [302, 134, 80], [54, 243, 60], [154, 243, 64], [254, 240, 80], [366, 243, 66], [92, 352, 60], [168, 352, 74]]) {
      s += this.rect(x, y, w, 3, '#e00') + `<circle cx="${x + 5}" cy="${y + 3}" r="5" fill="#e00"/>` + this.rect(x + 14, y - 5, w * .6, 5, '#c00');
    }
    return s;
  }

  tables() {
    let s = '';
    const grid = (x, y, w, h, rows, step, cols) => {
      s += this.rect(x, y + 40, w, h - 40, '#5c3a3e').replace('/>', ' fill-opacity=".6"/>');
      for (let i = 0; i < rows; i++) s += this.rect(x, y + h - 6 - i * step, w, 3, '#e07a74');
      for (const c of cols) {
        s += this.rect(c, y + 20, 3, h - 22, '#d06a66') + this.rect(c + 6, y + 26, this.rnd(18, 8), 6, '#0e0');
        for (let r = 0; r < rows; r++) s += this.rect(c + 8, y + h - 10 - r * step, this.rnd(10, 3), 4, '#0c0');
      }
      s += this.box(x, y, w, h, '#0ab4bc', 4) + this.rect(x, y + 15, w, 3, '#0ab4bc');
    };
    grid(35, 62, 444, 111, 9, 8, [62, 76, 120, 142, 164, 186, 226, 250, 274, 296, 324, 352, 388, 428]);
    s += this.rect(172, 65, 246, 8, '#fff');
    for (let y = 104; y < 168; y += 8) s += this.rect(78, y, 40, 4, '#6c3') + this.rect(232, y, 14, 4, '#0e0');
    s += this.rect(38, 186, 14, 6, '#0e0') + this.rect(46, 191, 110, 12, '#0f0') + this.rect(150, 200, 26, 4, '#0f0');
    s += this.rect(240, 191, 158, 6, '#0f0') + this.rect(240, 197, 150, 6, '#0f0') + this.rect(240, 203, 84, 5, '#0f0');
    grid(35, 244, 417, 60, 3, 9, [62, 98, 138, 210, 228, 246, 270, 306, 326, 344, 372]);
    s += this.rect(213, 247, 87, 8, '#fff') + this.rect(152, 278, 44, 22, '#0c0');
    return s + this.rect(42, 338, 12, 8, '#0f0') + this.rect(42, 345, 118, 16, '#0f0') + this.rect(150, 348, 24, 5, '#0f0');
  }

  connectedCallback() {
    const cols = [390, 590, 790, 989];
    const rows = [347, 490, 634];
    const plan = [
      ['schedule', 0, 0], ['notes', 1, 0], ['details', 2, 0], ['site', 3, 0],
      ['ground', 0, 1], ['tower', 1, 1], ['tower', 2, 1], ['tower', 3, 1],
      ['tower', 0, 2], ['roof', 1, 2], ['tables', 2, 2],
    ];
    const bars = { '01': [350, 378], '11': [360, 383], '21': [357, 381], '31': [350, 378], '02': [355, 386], '12': [357, 384] };
    let s = '';
    for (const [kind, c, r] of plan) {
      const bar = bars[`${c}${r}`];
      s += `<g transform="translate(${cols[c]} ${rows[r]}) scale(.3333)">${this.frame()}${this[kind]()}${bar ? this.scaleBar(...bar) : ''}</g>`;
    }
    // sheet corner ticks
    const arm = (x, y, l, rt, u, d) => `<path d="M${x - l} ${y}H${x + rt}M${x} ${y - u}V${y + d}"/>`;
    let ticks = '';
    [387, 587, 787, 986, 1186].forEach((x, i) => {
      [345, 487, 631, 773].forEach((y, j) => {
        if (i === 4 && j === 3) return;
        ticks += arm(x, y, i ? 4 : 0, i === 4 || (i === 3 && j === 3) ? 0 : 4, j ? 4 : 0, j === 3 || (i === 4 && j === 2) ? 0 : 4);
      });
    });

    this.shadowRoot.innerHTML = `
      <style>
        :host { display: block; position: absolute; inset: 0; }
        svg { display: block; width: 100%; height: 100%; }
      </style>
      <svg viewBox="0 234 1750 657" preserveAspectRatio="xMidYMid slice" aria-label="Model space">
        ${s}
        <g fill="none" stroke="#d0d0d0" stroke-width="1.500">
          ${ticks}
          <path d="M532 383V452H601M526 446H539V459H526ZM534 362L542 370L550 362M542 370V379M605 434L621 450M621 434L605 450"/>
          <path d="M604 601.500H690M710 601.500H796M699.500 505V592M699.500 611V698M690.500 592.500H709.500V610.500H690.500Z"/>
        </g>
      </svg>
    `;
  }
}
customElements.define('model-space', ModelSpace);

// ----- View cube -----
class ViewCube extends HTMLElement {
  constructor() {
    super();
    this.attachShadow({ mode: 'open' }).innerHTML = `
      <style>
        ${RESET}
        :host { position: absolute; top: 46px; right: 12px; width: 124px; display: flex; flex-direction: column; align-items: center; font-family: "Liberation Sans", Arial, sans-serif; color: #b9bbbd; }
        .ring { position: relative; width: 112px; height: 112px; margin: 5px 0; border: 13px solid #46494e; border-radius: 50%; display: grid; place-items: center; }
        .face { width: 48px; height: 48px; background: #a2a6ae; border: 9px solid #b3b3b5; color: #4a4e55; font-size: 13px; font-weight: bold; line-height: 30px; text-align: center; }
        .dir { position: absolute; font-size: 20px; font-weight: bold; line-height: 20px; }
        .n { top: -18px; } .s { bottom: -18px; } .w { left: -18px; } .e { right: -16px; }
        .wcs { margin-top: 19px; width: 64px; height: 24px; border: 2px solid #b0b2b4; border-radius: 5px; background: #8f939e; color: #51555c; font-size: 14px; display: flex; align-items: center; justify-content: space-around; }
      </style>
      <div class="ring">
        <button class="face">TOP</button>
        <span class="dir n">N</span><span class="dir e">E</span><span class="dir s">S</span><span class="dir w">W</span>
      </div>
      <button class="wcs">WCS ${caret(10, 6, '#aeb1b5')}</button>
    `;
  }
}
customElements.define('view-cube', ViewCube);

// ----- Navigation bar -----
class NavBar extends HTMLElement {
  constructor() {
    super();
    const k = '#43474c';
    const tool = (label, body) => `<button aria-label="${label}"><svg width="32" height="32" viewBox="0 0 32 32" fill="none" stroke="${k}" stroke-width="1.800">${body}</svg></button>`;
    const more = `<i>${caret(7, 4, k)}</i>`;
    this.attachShadow({ mode: 'open' }).innerHTML = `
      <style>
        ${RESET}
        :host { position: absolute; top: 241px; right: 1px; width: 42px; height: 284px; border-radius: 4px; background: #5a5e62; display: flex; flex-direction: column; align-items: center; padding: 3px 2px; }
        .dot { align-self: flex-end; margin-bottom: 8px; }
        i { height: 20px; display: grid; place-items: center; }
        hr { width: 35px; margin: 0 0 4px; border: 0; border-top: 1px solid #696d71; }
        .end { margin: auto 0 0; }
        .zoom { display: block; margin-top: 6px; }
      </style>
      <svg class="dot" width="10" height="10" viewBox="0 0 10 10"><circle cx="5" cy="5" r="4" fill="none" stroke="${k}" stroke-width="2"/><path d="M3 3l4 4M7 3L3 7" stroke="${k}"/></svg>
      ${tool('Steering wheel', '<path d="M16 1H31V16A15 15 0 1 1 16 1Z"/><circle cx="16" cy="16" r="11"/><circle cx="16" cy="16" r="8"/><path d="M9 22l-4 4M23 22l4 4"/>')}
      ${more}<hr>
      ${tool('Pan', '<path d="M9 29C6 24 4 21 1 20 2 16 6 18 9 21L7 6C8 3 11 4 11 7L13 15 14 3C15 0 18 0 18 3V15L21 5C23 3 25 5 24 8L22 17 28 11C30 10 32 12 30 14L23 29C19 33 13 33 9 29Z"/>')}
      <div class="zoom">${tool('Zoom', '<path d="M2 3L20 22M22 3L2 22M2 8V3h5M17 3h5v5M2 17v5h5"/><circle cx="23" cy="22" r="6" fill="#5a5e62"/><path d="M27 27l5 5" stroke-width="4"/>')}</div>
      ${more}
      ${tool('Orbit', '<path d="M13 31V9H9L16 1 23 9H19V31Z"/><path d="M9 23C-3 19 1 14 16 14S37 21 22 23H8M12 18l-5 5 5 5"/>')}
      ${more}<hr>
      ${tool('Show motion', '<path d="M1 2h8v7H1zM12 2h8v7h-8zM23 2h8v7h-8zM1 13h21v18H1z"/><path d="M8 17v10l8-5z" fill="#43474c"/>')}
      <svg class="dot end" width="10" height="10" viewBox="0 0 10 10"><circle cx="5" cy="5" r="4" fill="none" stroke="${k}" stroke-width="2"/><path d="M3 5h4" stroke="${k}"/></svg>
    `;
    // buttons shrink to their drawing
    this.shadowRoot.querySelectorAll('button').forEach(b => { b.style.display = 'block'; });
  }
}
customElements.define('nav-bar', NavBar);

// ----- Command history and input -----
class CommandLine extends HTMLElement {
  constructor() {
    super();
    this.attachShadow({ mode: 'open' }).innerHTML = `
      <style>
        ${RESET}
        :host { position: absolute; left: 20%; right: 20%; bottom: 0; font-family: "Liberation Mono", "DejaVu Sans Mono", monospace; font-size: 17px; }
        .log { display: flex; flex-direction: column; align-items: flex-start; gap: 4px; margin: 0 0 2px 34%; }
        .log span { padding: 0 2px; line-height: 24px; border-radius: 3px; background: #4b4e51; color: #a4a6a8; white-space: nowrap; }
        .log span:nth-child(2) { background: #56585b; color: #bcbec0; }
        .log span:nth-child(3) { background: #616365; color: #f2f2f2; }
        .bar { display: flex; align-items: center; height: 36px; border-radius: 4px; border: 2px solid #b8b9bb; border-bottom-color: #8f8f91; background: #a7a9ab; padding-left: 8px; }
        .grip { width: 2px; height: 24px; border-left: 2px dotted #555; }
        .x { margin: 0 12px 0 9px; }
        .in { flex: 1; display: flex; align-items: center; gap: 3px; height: 100%; margin-left: 6px; padding: 0 8px 0 5px; background: #bcbdbf; border-radius: 3px; }
        .in input { flex: 1; border: 0; background: none; font: inherit; font-style: italic; padding: 0 0 0 7px; outline: 0; }
        .in input::placeholder { color: #5e6062; }
        .log, .in input { font-family: "DejaVu Sans Mono", "Liberation Mono", monospace; }
        .mark { position: absolute; left: 418px; bottom: 4px; pointer-events: none; }
      </style>
      <div class="log"><span>Command:</span><span>Command: _WSCURRENT</span><span>Enter new value for WSCURRENT &lt;"3D Modeling"&gt;: Drafting &amp; Annotation</span></div>
      <div class="bar">
        <span class="grip"></span>
        <button class="x" aria-label="Close command line"><svg width="13" height="13" viewBox="0 0 13 13"><path d="M1 1L12 12M12 1L1 12" stroke="#444" stroke-width="3"/></svg></button>
        <button aria-label="Customize"><svg width="24" height="24" viewBox="0 0 24 24"><path d="M2 19L12 10C11 5 14 2 19 2L16 6 18 8 22 5C22 10 19 13 14 12L5 22C3 23 1 21 2 19Z" fill="#b4b6b8" stroke="#666" stroke-width="1.300"/></svg></button>
        <label class="in">
          <svg width="22" height="18" viewBox="0 0 22 18"><path d="M.5.5H21.500V17.500H.5Z" fill="#b4b5b7" stroke="#888"/><path d="M1 1h20v4H1z" fill="#888"/><path d="M3 8l3 2-3 2M7 13h5" fill="none" stroke="#777"/></svg>
          ${caret(10, 6, '#888')}
          <input placeholder="Type a command" aria-label="Command">
          <svg width="9" height="7" viewBox="0 0 9 7"><path d="M0 7L4 0L9 7Z" fill="#555"/></svg>
        </label>
      </div>
      <svg class="mark" width="206" height="50" viewBox="0 0 206 50" fill="#c8c8c8" fill-opacity=".25"><path d="M14 8l5-5 5 5-5 5zM28 8l5-5 5 5-5 5zM52 0h6v38H6V16h6v14h40zM60 18h6v12h14V16h6v14h14V16h6v22H60zM112 16h22v22h-22zM136 0h6v38h-6zM150 26c0-16 34-16 34 12h-34zM186 6l5 6 5-6z"/></svg>
    `;
  }
}
customElements.define('command-line', CommandLine);

// ----- Status bar -----
class StatusBar extends HTMLElement {
  constructor() {
    super();
    this.attachShadow({ mode: 'open' }).innerHTML = `
      <style>
        ${RESET}
        :host { display: flex; height: 9px; flex: none; overflow: hidden; padding-top: 4px; background: #d9d9d9; border-top: 2px solid #b6b4b8; gap: 5px; }
        .tab { width: 86px; height: 20px; margin-left: 10px; border-radius: 10px 10px 0 0; background: #f2f2f2; }
        .tab + .tab { margin-left: 0; background: #e8e8e8; }
        .gap { flex: 1; }
        .g { display: flex; gap: 2px; padding: 0 4px; background: #f5f5f5; height: 20px; }
        .g b { width: 31px; border: 1px solid #5a95c8; background: #c9e2f5; }
        .g em { width: 20px; background: #2c62ae; }
        .snap { width: 229px; justify-content: flex-end; padding-right: 20px; }
      </style>
      <span class="tab"></span><span class="tab"></span><span class="gap"></span>
      <span class="g" style="width:66px"></span><span class="g" style="width:88px"></span>
      <span class="g snap"><b></b><b></b></span>
      <span class="g" style="width:180px"><b></b></span>
      <span class="g" style="width:87px"></span><span class="g" style="width:34px"></span>
      <span class="g" style="width:74px"><em></em></span><span class="g" style="width:65px"></span>
    `;
  }
}
customElements.define('status-bar', StatusBar);

// ----- App shell -----
class CadApp extends HTMLElement {
  constructor() {
    super();
    this.attachShadow({ mode: 'open' }).innerHTML = `
      <style>
        ${RESET}
        :host { display: flex; flex-direction: column; height: 100vh; }
        .logo { position: absolute; left: 7px; top: 6px; }
        .view { flex: 1; position: relative; min-height: 0; overflow: hidden; background: #222830; border-top: 1px solid #11151a; box-shadow: 0 -3px 0 #f8f8f8; margin-top: 3px; }
        .head { position: relative; z-index: 1; display: flex; justify-content: space-between; color: #f0f0f0; padding: 5px 3px 0 1px; line-height: 24px; }
        .win { display: flex; --cell: 27px; }
        .win cad-icon { height: 26px; }
      </style>
      <title-bar></title-bar>
      <ribbon-tabs></ribbon-tabs>
      <button class="logo" aria-label="Application menu">
        <svg width="36" height="39" viewBox="0 0 36 39"><path d="M12 1H22L35 37L27 38L23 26H13L8 38L1 37Z" fill="#c32027"/><path d="M15 21L18 9L21 19Z" fill="#d9d9d9"/><path d="M12 1L14 3L5 35L1 37Z" fill="#7e1519"/><path d="M22 1L19 4L30 35L35 37Z" fill="#e4393f"/><path d="M7 27L24 18L25 23L9 33Z" fill="#a0181e"/></svg>
      </button>
      <cad-ribbon></cad-ribbon>
      <file-tabs></file-tabs>
      <main class="view">
        <model-space></model-space>
        <div class="head"><span>[−][Top][2D Wireframe]</span>
          <span class="win"><cad-icon name="vpMin" label="Minimize view"></cad-icon><cad-icon name="vpRestore" label="Restore view"></cad-icon><cad-icon name="vpClose" label="Close view"></cad-icon></span>
        </div>
        <view-cube></view-cube>
        <nav-bar></nav-bar>
        <command-line></command-line>
      </main>
      <status-bar></status-bar>
    `;
  }
}
customElements.define('cad-app', CadApp);
</script>
</body>
</html>
